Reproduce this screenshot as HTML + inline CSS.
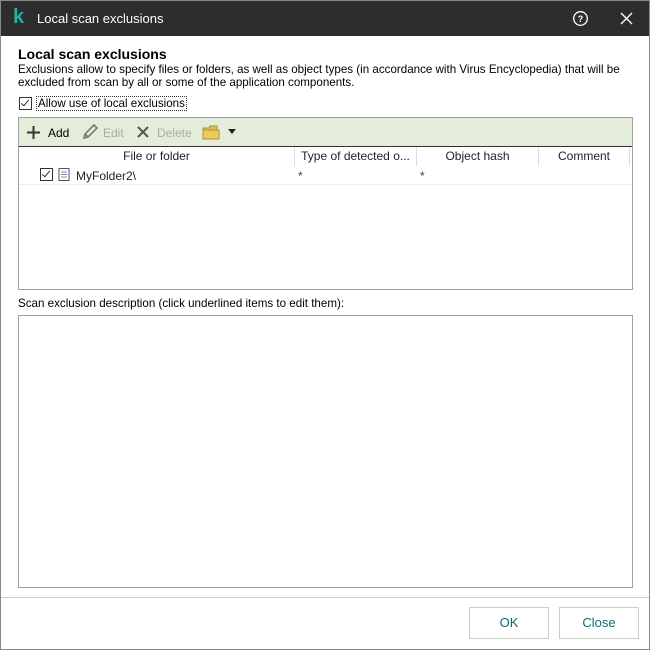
<!DOCTYPE html>
<html><head><meta charset="utf-8"><style>
body{margin:0;width:650px;height:650px;overflow:hidden;font-family:"Liberation Sans",sans-serif;font-size:12px;color:#000;background:#fff}
.win{position:absolute;left:0;top:0;width:648px;height:648px;border:1px solid #888;background:#fff}
.title{position:absolute;left:0;top:0;width:648px;height:35px;background:#2d2d2d;color:#fff}
.abs{position:absolute;white-space:nowrap}
.cb{position:absolute;width:11px;height:11px;border:1px solid #333;background:#fff}
.cb:after{content:"";position:absolute;left:3px;top:0px;width:3px;height:7px;border:solid #333;border-width:0 1.5px 1.5px 0;transform:rotate(40deg)}
.box{position:absolute;border:1px solid #a0a0a0;background:#fff}
.btn{position:absolute;width:78px;height:30px;border:1px solid #ccc;background:#fff;color:#0a6a73;font-size:13px;text-align:center;line-height:30px}
.hd{position:absolute;top:0;height:19px;line-height:19px;text-align:center;color:#222;border-right:1px solid #ddd}
</style></head><body>
<div class="win">
 <div class="title">
  <div class="abs" style="left:12px;top:5px;color:#1fb59a;font-weight:bold;font-size:20px">k</div>
  <div class="abs" style="left:36px;top:10px;font-size:13px">Local scan exclusions</div>
  <svg class="abs" style="left:571px;top:9px" width="17" height="17" viewBox="0 0 17 17"><circle cx="8.5" cy="8.5" r="6.8" fill="none" stroke="#fff" stroke-width="1.3"/><text x="8.5" y="12" fill="#fff" font-size="9" font-weight="bold" text-anchor="middle" font-family="Liberation Sans">?</text></svg>
  <svg class="abs" style="left:619px;top:11px" width="13" height="13"><path d="M1 1L12 12M12 1L1 12" stroke="#fff" stroke-width="1.4"/></svg>
 </div>
 <div class="abs" style="left:17px;top:45px;font-size:14px;font-weight:bold">Local scan exclusions</div>
 <div class="abs" style="left:17px;top:62px;line-height:13px;font-size:11.6px">Exclusions allow to specify files or folders, as well as object types (in accordance with Virus Encyclopedia) that will be<br>excluded from scan by all or some of the application components.</div>
 <div class="cb" style="left:18px;top:96px"></div>
 <div class="abs" style="left:35px;top:95px;border:1px dotted #333;padding:0 1px;font-size:11.6px">Allow use of local exclusions</div>
 <div class="box" style="left:17px;top:116px;width:613px;height:171px">
  <div style="position:absolute;left:0;top:0;width:613px;height:28px;background:#e4edda;border-bottom:1px solid #333"></div>
  <svg class="abs" style="left:7px;top:7px" width="15" height="15"><path d="M7.5 1V14M1 7.5H14" stroke="#333" stroke-width="2"/></svg>
  <div class="abs" style="left:29px;top:8px">Add</div>
  <svg class="abs" style="left:62px;top:5px" width="18" height="18"><path d="M3 15L4 11L13 2L16 5L7 14Z M4 11L7 14" fill="none" stroke="#777" stroke-width="1.6"/></svg>
  <div class="abs" style="left:84px;top:8px;color:#aaa">Edit</div>
  <svg class="abs" style="left:118px;top:8px" width="12" height="12"><path d="M1 1L11 11M11 1L1 11" stroke="#555" stroke-width="2"/></svg>
  <div class="abs" style="left:138px;top:8px;color:#aaa">Delete</div>
  <svg class="abs" style="left:183px;top:6px" width="18" height="16"><path d="M1 4H7L8 2H15V15H1Z" fill="#e0c050" stroke="#b09030"/><rect x="1" y="6" width="16" height="9" fill="#e8cc60" stroke="#b09030"/></svg>
  <svg class="abs" style="left:209px;top:11px" width="8" height="5"><path d="M0 0H8L4 5Z" fill="#222"/></svg>
  <div style="position:absolute;left:0;top:29px;width:613px;height:19px">
   <div class="hd" style="left:0;width:275px">File or folder</div>
   <div class="hd" style="left:276px;width:121px">Type of detected o...</div>
   <div class="hd" style="left:398px;width:121px">Object hash</div>
   <div class="hd" style="left:520px;width:90px">Comment</div>
  </div>
  <div style="position:absolute;left:0;top:66px;width:613px;height:1px;background:#eee"></div>
  <div class="cb" style="left:21px;top:50px"></div>
  <svg class="abs" style="left:39px;top:49px" width="12" height="15"><rect x="1" y="1.5" width="10" height="12" fill="#fff" stroke="#556" /><path d="M3 5H9M3 7.5H9M3 10H9" stroke="#88a"/></svg>
  <div class="abs" style="left:57px;top:51px;color:#222">MyFolder2\</div>
  <div class="abs" style="left:279px;top:51px;color:#444">*</div>
  <div class="abs" style="left:401px;top:51px;color:#444">*</div>
 </div>
 <div class="abs" style="left:17px;top:296px;font-size:11.6px">Scan exclusion description (click underlined items to edit them):</div>
 <div class="box" style="left:17px;top:314px;width:613px;height:271px"></div>
 <div style="position:absolute;left:0;top:596px;width:648px;height:1px;background:#ccc"></div>
 <div class="btn" style="left:468px;top:606px">OK</div>
 <div class="btn" style="left:558px;top:606px">Close</div>
</div>
</body></html>
